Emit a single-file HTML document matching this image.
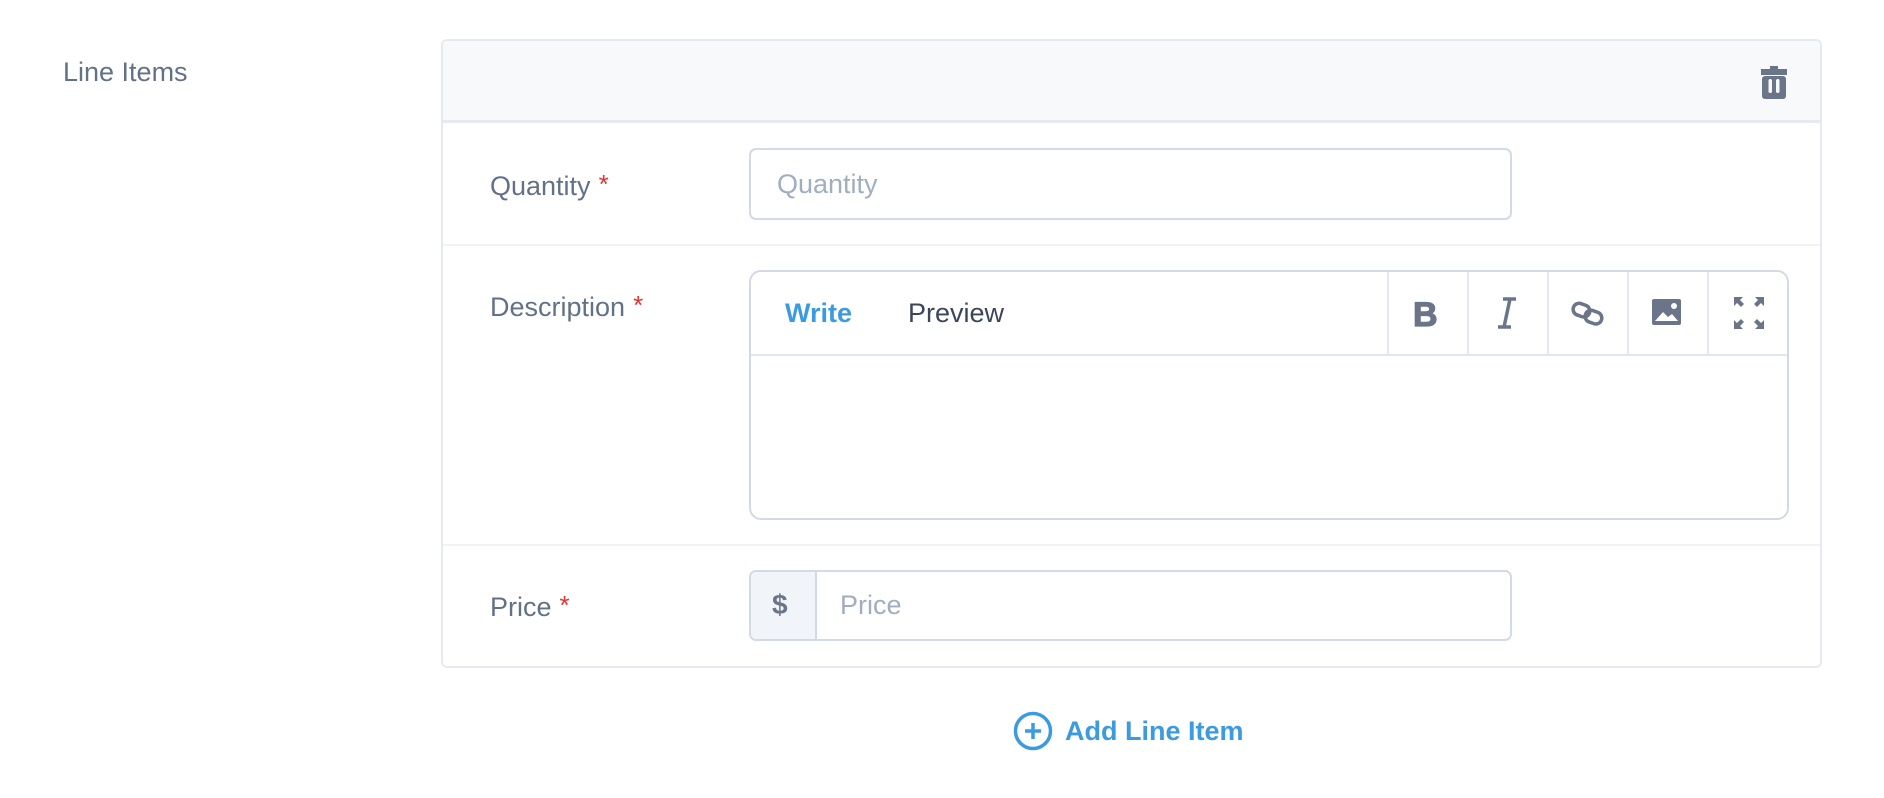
<!DOCTYPE html>
<html><head><meta charset="utf-8"><style>
*{box-sizing:border-box;margin:0;padding:0}
body{width:1884px;height:798px;background:#fff;font-family:"Liberation Sans",sans-serif;position:relative;overflow:hidden;color:#637188}
.abs{position:absolute}
.lbl{font-size:27px;color:#637188;line-height:1}
.req{color:#e3342f;font-size:26px;vertical-align:2px;margin-left:8px}
</style></head><body>
<div class="abs lbl" style="left:63px;top:59px">Line Items</div>

<div class="abs" style="left:441px;top:39px;width:1381px;height:629px;border:2px solid #e6eaf0;border-radius:6px;overflow:hidden">
  <div class="abs" style="left:0;top:0;width:100%;height:82px;background:#f7f9fb;border-bottom:3px solid #e6eaf0"></div>
  <svg class="abs" style="left:1317px;top:24px" width="28" height="35" viewBox="0 0 28 35"><path d="M10 1h8v3h9v6H1V4h9z" fill="#6b7589"/><rect x="2" y="11" width="24" height="23" rx="3" fill="#6b7589"/><rect x="8.5" y="14" width="3.5" height="14" rx="1.75" fill="#f7f9fb"/><rect x="16" y="14" width="3.5" height="14" rx="1.75" fill="#f7f9fb"/></svg>
  <div class="abs" style="left:0;top:203px;width:100%;height:2px;background:#f1f3f7"></div>
  <div class="abs" style="left:0;top:503px;width:100%;height:2px;background:#f1f3f7"></div>
</div>

<div class="abs lbl" style="left:490px;top:171px">Quantity<span class="req">*</span></div>
<div class="abs" style="left:749px;top:148px;width:763px;height:72px;border:2px solid #d3dae5;border-radius:7px"></div>
<div class="abs lbl" style="left:777px;top:171px;color:#a0aec0">Quantity</div>

<div class="abs lbl" style="left:490px;top:292px">Description<span class="req">*</span></div>
<div class="abs" style="left:749px;top:270px;width:1040px;height:250px;border:2px solid #d3dae5;border-radius:12px;overflow:hidden">
  <div class="abs" style="left:0;top:0;width:100%;height:84px;border-bottom:2px solid #e2e7ee"></div>
  <div class="abs" style="left:34px;top:26px;font-size:27px;font-weight:bold;color:#3c9be0">Write</div>
  <div class="abs" style="left:157px;top:26px;font-size:27px;color:#3c4658">Preview</div>
  <div class="abs" style="left:636px;top:0;width:2px;height:84px;background:#e2e7ee"></div>
  <div class="abs" style="left:716px;top:0;width:2px;height:84px;background:#e2e7ee"></div>
  <div class="abs" style="left:796px;top:0;width:2px;height:84px;background:#e2e7ee"></div>
  <div class="abs" style="left:876px;top:0;width:2px;height:84px;background:#e2e7ee"></div>
  <div class="abs" style="left:956px;top:0;width:2px;height:84px;background:#e2e7ee"></div>
  <div class="abs" style="left:662px;top:24px;font-size:34px;font-weight:900;color:#6b7589;-webkit-text-stroke:1.2px #6b7589">B</div>
  <svg class="abs" style="left:743px;top:25px" width="26" height="32" viewBox="0 0 26 32"><path d="M9 2h13M4 30h13M16 2L10 30" stroke="#6b7589" stroke-width="3.5" fill="none"/></svg>
  <svg class="abs" style="left:820px;top:29px" width="34" height="26" viewBox="0 0 34 26"><rect x="2" y="3" width="17" height="12" rx="6" transform="rotate(20 10 9)" stroke="#6b7589" stroke-width="3.5" fill="none"/><rect x="14" y="10" width="17" height="12" rx="6" transform="rotate(20 22 16)" stroke="#6b7589" stroke-width="3.5" fill="none"/></svg>
  <svg class="abs" style="left:901px;top:27px" width="30" height="26" viewBox="0 0 30 26"><rect x="0" y="0" width="29" height="26" rx="2" fill="#6b7589"/><path d="M3 22l8-9 5 5 4-3 6 7z" fill="#fff"/><circle cx="22" cy="7" r="3" fill="#fff"/></svg>
  <svg class="abs" style="left:983px;top:25px" width="30" height="32" viewBox="0 0 30 32"><g fill="#6b7589"><path d="M0 0h9L6 3l4 4-3 3-4-4-3 3z"/><path d="M30 0h-9l3 3-4 4 3 3 4-4 3 3z"/><path d="M0 32h9l-3-3 4-4-3-3-4 4-3-3z"/><path d="M30 32h-9l3-3-4-4 3-3 4 4 3-3z"/></g></svg>
</div>

<div class="abs lbl" style="left:490px;top:592px">Price<span class="req">*</span></div>
<div class="abs" style="left:749px;top:570px;width:763px;height:71px;border:2px solid #d3dae5;border-radius:7px;overflow:hidden">
  <div class="abs" style="left:0;top:0;width:66px;height:100%;background:#f1f4f9;border-right:2px solid #d3dae5"></div>
  <div class="abs" style="left:21px;top:17px;font-size:28px;font-weight:bold;color:#6b7589">$</div>
</div>
<div class="abs lbl" style="left:840px;top:592px;color:#a0aec0">Price</div>

<svg class="abs" style="left:1013px;top:711px" width="40" height="40" viewBox="0 0 40 40"><circle cx="20" cy="20" r="17.5" stroke="#3c9be0" stroke-width="3.5" fill="none"/><path d="M20 12v16M12 20h16" stroke="#3c9be0" stroke-width="3.5"/></svg>
<div class="abs" style="left:1065px;top:716px;font-size:27px;font-weight:bold;color:#3c9be0">Add Line Item</div>
</body></html>
